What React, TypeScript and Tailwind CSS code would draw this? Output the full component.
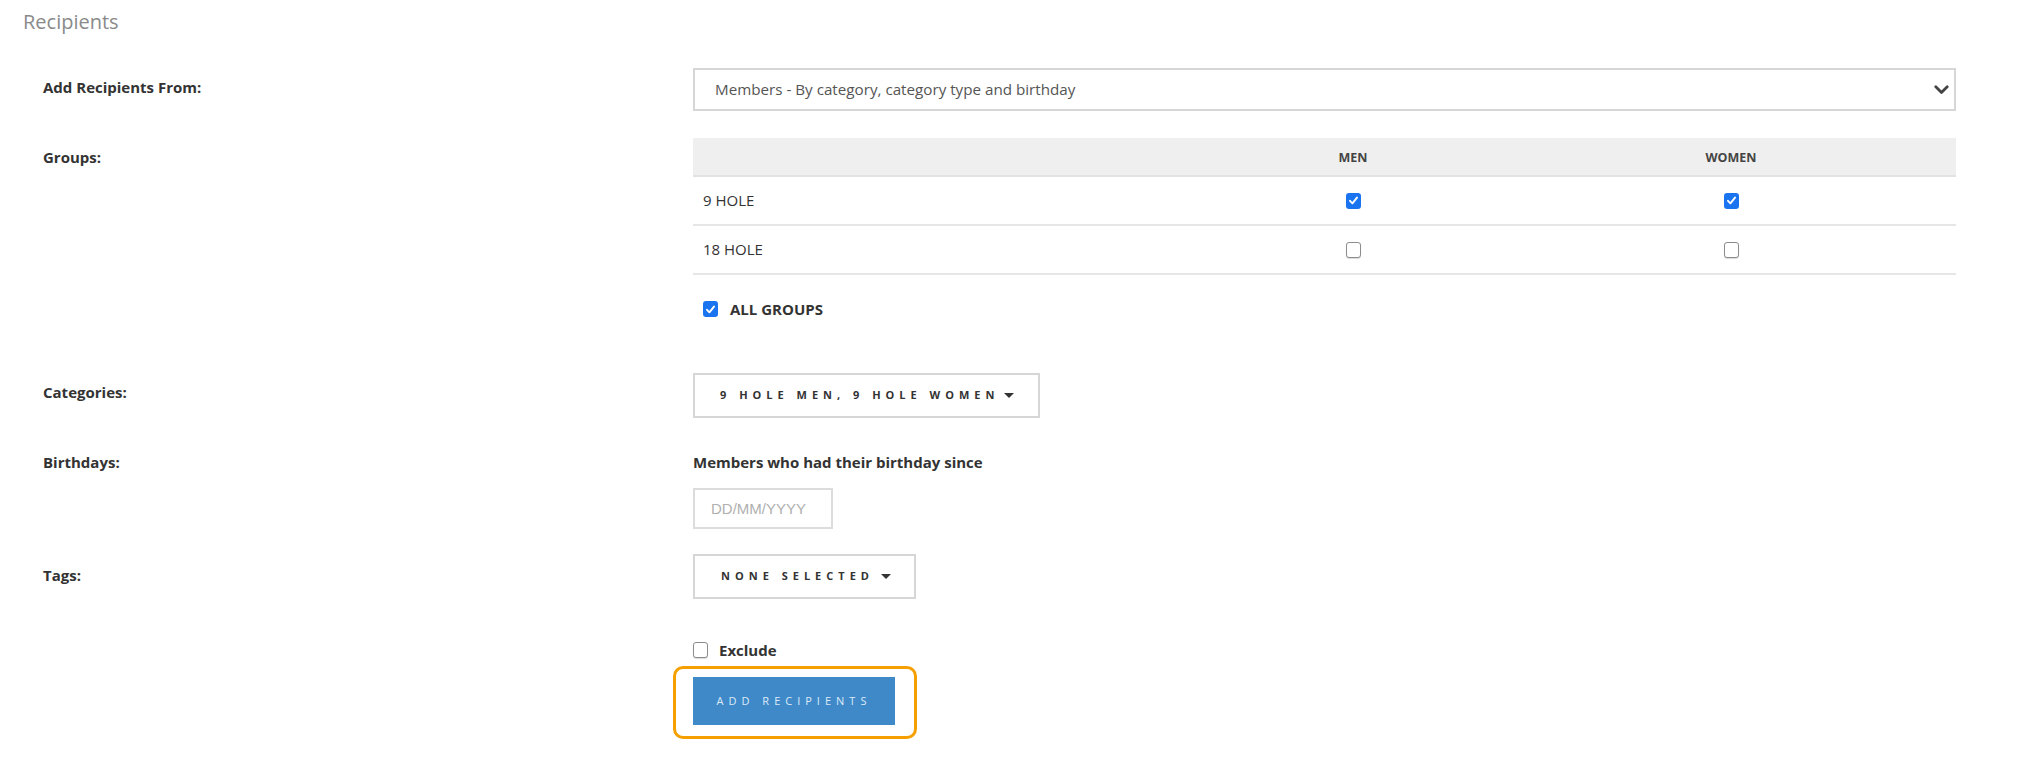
import React from "react";

// form row: label on the left, controls on the right
function Row({
  label,
  top,
  labelPad,
  children,
}: {
  label?: string;
  top: string;
  labelPad?: string;
  children: React.ReactNode;
}) {
  return (
    <div className={`flex items-start ${top}`}>
      <div className={`w-[650px] shrink-0 text-[15px] leading-[20px] font-bold text-[#333] ${labelPad ?? ""}`}>
        {label}
      </div>
      <div className="flex-1">{children}</div>
    </div>
  );
}

function Check({ on }: { on: boolean }) {
  if (on) {
    return (
      <span className="inline-flex w-[15px] h-[16px] items-center justify-center rounded-[3px] bg-[#1a74f0]">
        <svg width="11" height="11" viewBox="0 0 11 11">
          <path d="M2 5.8 L4.4 8.3 L9 2.6" fill="none" stroke="#fff" strokeWidth="1.9" strokeLinecap="round" strokeLinejoin="round" />
        </svg>
      </span>
    );
  }
  return <span className="inline-block w-[15px] h-[16px] rounded-[3px] border-[1.5px] border-[#8c8c8c] bg-white shadow-[0_1px_1px_rgba(0,0,0,0.15)]" />;
}

function Caret() {
  return (
    <svg width="10" height="5" viewBox="0 0 10 5" className="shrink-0">
      <polygon points="0,0 10,0 5,5" fill="#333" />
    </svg>
  );
}

const groups = [
  { name: "9 HOLE", men: true, women: true },
  { name: "18 HOLE", men: false, women: false },
];

export default function App() {
  return (
    <div className="min-h-screen bg-white font-['Open_Sans',sans-serif] text-[#333]">
      <div className="pl-[23px] pt-[9px] text-[20px] leading-[26px] text-[#8a8a8a]">Recipients</div>

      <div className="pl-[43px] pr-[67px]">
        <Row label="Add Recipients From:" top="mt-[33px]" labelPad="pt-[9px]">
          <div className="h-[43px] border-2 border-[#d6d6d6] flex items-center justify-between pl-[20px] pr-[5px] text-[15.2px] text-[#555]">
            <span>Members - By category, category type and birthday</span>
            <svg width="15" height="10" viewBox="0 0 15 10">
              <path d="M1.8 1.8 L7.5 7.5 L13.2 1.8" fill="none" stroke="#444" strokeWidth="2.8" strokeLinecap="round" strokeLinejoin="round" />
            </svg>
          </div>
        </Row>

        <Row label="Groups:" top="mt-[27px]" labelPad="pt-[9px]">
          <div className="grid grid-cols-[507px_306px_1fr] h-[39px] items-center pt-[3px] bg-[#efefef] border-b-2 border-[#e2e2e2] text-[12.5px] font-bold text-[#444]">
            <span />
            <span className="text-center">MEN</span>
            <span className="text-center">WOMEN</span>
          </div>
          {groups.map((g) => (
            <div key={g.name} className="grid grid-cols-[507px_306px_1fr] h-[49px] items-center border-b-2 border-[#e6e6e6] text-[15px] text-[#333]">
              <span className="pl-[10px]">{g.name}</span>
              <span className="flex justify-center">
                <Check on={g.men} />
              </span>
              <span className="flex justify-center">
                <Check on={g.women} />
              </span>
            </div>
          ))}
          <div className="mt-[24px] pl-[10px] flex items-center gap-[12px] text-[15px] leading-[20px] font-bold text-[#333]">
            <Check on />
            <span>ALL GROUPS</span>
          </div>
        </Row>

        <Row label="Categories:" top="mt-[54px]" labelPad="pt-[9px]">
          <button className="h-[45px] inline-flex items-center border-2 border-[#d6d6d6] bg-white pl-[25px] pr-[24px] text-[11px] font-bold tracking-[5px] text-[#333]">
            <span>9 HOLE MEN, 9 HOLE WOMEN</span>
            <span className="ml-[5px]">
              <Caret />
            </span>
          </button>
        </Row>

        <Row label="Birthdays:" top="mt-[34px]">
          <div className="text-[15px] leading-[20px] font-bold text-[#333]">Members who had their birthday since</div>
          <input
            placeholder="DD/MM/YYYY"
            className="mt-[16px] block w-[140px] h-[41px] border-2 border-[#dcdcdc] pl-[16px] font-['Liberation_Sans',sans-serif] text-[15px] text-[#333] placeholder:text-[#b0b0b0] outline-none"
          />
        </Row>

        <Row label="Tags:" top="mt-[25px]" labelPad="pt-[11px]">
          <button className="h-[45px] inline-flex items-center border-2 border-[#d6d6d6] bg-white pl-[26px] pr-[23px] text-[11px] font-bold tracking-[5px] text-[#333]">
            <span>NONE SELECTED</span>
            <span className="ml-[7px]">
              <Caret />
            </span>
          </button>
        </Row>

        <Row top="mt-[41px]">
          <div className="flex items-center gap-[11px] text-[15px] leading-[20px] font-bold text-[#333]">
            <Check on={false} />
            <span>Exclude</span>
          </div>
          <div className="relative mt-[17px] inline-block">
            <button className="w-[202px] h-[48px] bg-[#3f89c9] text-[11px] font-medium tracking-[5px] text-[#dce9f6]">
              ADD RECIPIENTS
            </button>
            <div className="pointer-events-none absolute -left-[20px] -right-[22px] -top-[11px] -bottom-[14px] rounded-[10px] border-[3px] border-[#f5a000]" />
          </div>
        </Row>
      </div>
    </div>
  );
}
